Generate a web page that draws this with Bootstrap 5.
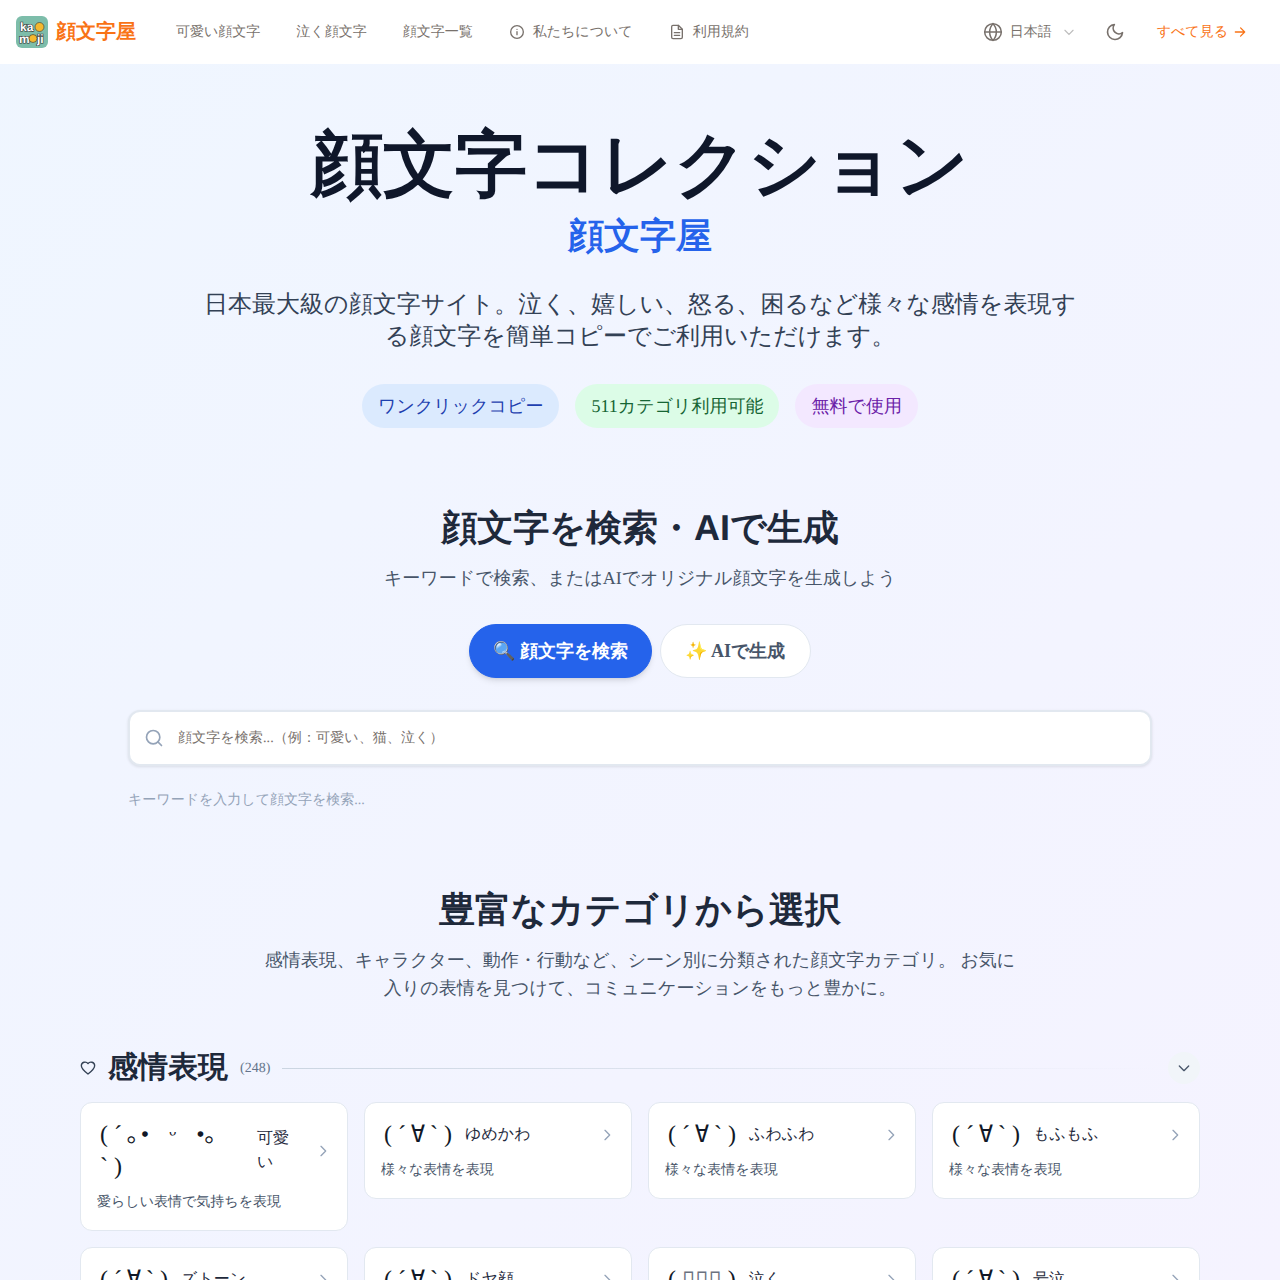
<!DOCTYPE html>
<html>
<head>
  <meta charset="UTF-8">
  <meta name="viewport" content="width=device-width, initial-scale=1.0">
  <title>顔文字屋</title>
  <link href="https://cdn.jsdelivr.net/npm/bootstrap@5.3.0/dist/css/bootstrap.min.css" rel="stylesheet">
  <style>
    html, body { height: 1280px; overflow: hidden; }
    body {
      font-family: "Liberation Serif", serif;
      background: linear-gradient(135deg, #eff6ff, #f5f3ff);
      color: #1e293b;
      text-rendering: geometricPrecision;
    }
    .top-bar { height: 64px; background: #fff; padding: 0 16px; }
    .logo-box { width: 32px; height: 32px; margin-right: 8px; flex: none; }
    .logo-name { font-size: 20px; font-weight: 700; color: #f97316; margin-right: 22px; }
    .top-link { font-size: 14px; color: #78716c; padding: 0 18px; display: flex; align-items: center; gap: 8px; text-decoration: none; white-space: nowrap; }
    .top-link svg { width: 16px; height: 16px; }
    .lang-link { font-size: 14px; color: #78716c; display: flex; align-items: center; gap: 7px; text-decoration: none; margin-right: 29px; }
    .lang-link .lang-caret { margin-left: 3px; }
    .more-link { font-size: 14px; color: #f97316; text-decoration: none; display: flex; align-items: center; gap: 5px; margin-left: 32px; margin-right: 17px; }
    .hero-title { font-size: 72px; font-weight: 700; line-height: 80px; color: #0f172a; margin: 61px 0 0; }
    .hero-sub { font-size: 36px; font-weight: 700; color: #2563eb; line-height: 52px; margin: 5px 0 27px; }
    .hero-text { font-size: 24px; line-height: 32px; color: #334155; width: 880px; margin: 0 auto 31px; }
    .pill { font-size: 18px; line-height: 28px; padding: 8px 16px; border-radius: 22px; }
    .pill-blue { background: #dbeafe; color: #1e40af; }
    .pill-green { background: #dcfce7; color: #166534; }
    .pill-purple { background: #f3e8ff; color: #6b21a8; }
    .sec-title { font-size: 36px; font-weight: 700; line-height: 40px; color: #1e293b; font-family: "Liberation Sans", sans-serif; margin-bottom: 16px; }
    .sec-text { font-size: 18px; line-height: 28px; color: #475569; }
    .tab-btn { font-size: 18px; font-weight: 700; height: 54px; padding: 0 24.5px; border-radius: 27px; border: 1px solid #e2e8f0; background: #fff; color: #475569; }
    .tab-on { background: #2563eb; border-color: #2563eb; color: #fff; padding: 0 23px; box-shadow: 0 4px 6px -1px rgba(0,0,0,.1), 0 2px 4px -2px rgba(0,0,0,.1); }
    .search-wrap { width: 1024px; margin: 0 auto; }
    .search-box { height: 56px; background: #fff; border: 2px solid #e2e8f0; border-radius: 12px; padding: 0 14px; gap: 14px; box-shadow: 0 1px 3px rgba(0,0,0,.1); font-size: 14px; color: #78716c; letter-spacing: .1px; }
    .search-hint { font-size: 14px; line-height: 20px; color: #94a3b8; margin-top: 25px; }
    .cats { width: 1120px; margin: 48px auto 0; }
    .group-name { font-size: 30px; font-weight: 700; line-height: 36px; color: #1e293b; }
    .group-count { font-size: 14px; color: #64748b; }
    .group-line { height: 1px; background: linear-gradient(90deg, #cbd5e1, transparent); }
    .fold-btn { width: 32px; height: 32px; border-radius: 50%; background: #f1f5f9; border: 0; padding: 0; }
    .kao-grid { display: grid; grid-template-columns: repeat(4, 1fr); gap: 16px; align-items: start; }
    .kao-card { background: #fff; border: 1px solid #e2e8f0; border-radius: 12px; padding: 16px; }
    .kao-face { font-size: 24px; line-height: 32px; color: #111827; padding: 0 1px 0 3px; min-width: 0; }
    .kao-name { font-size: 16px; line-height: 24px; color: #1e293b; margin-left: 12px; min-width: 0; }
    .kao-tight .kao-face { flex: none; width: 146px; }
    .kao-tight .kao-name { flex: none; width: 40px; margin-left: 14px; }
    .kao-desc { font-size: 14px; line-height: 23px; color: #475569; margin-top: 8px; }
    .kao-arrow { width: 16px; height: 16px; flex: none; }
    .tofu { color: #6b7280; line-height: 1; }
    .wide-sym { font-family: "DejaVu Sans Mono", monospace; line-height: 1; padding: 0 4.8px; }
    .dot-sym { font-family: "Noto Sans CJK JP", sans-serif; line-height: 1; }
  </style>
</head>
<body>
  <nav class="top-bar d-flex align-items-center">
    <svg class="logo-box" viewBox="0 0 32 32">
      <rect width="32" height="32" rx="6" fill="#7dbdaa"/>
      <g font-family="Liberation Sans" font-weight="700" font-size="12" fill="#fff" stroke="#333" stroke-width="1.200" paint-order="stroke">
        <text x="4" y="15">ka</text>
        <text x="3" y="27">m</text>
        <text x="21" y="27">ji</text>
      </g>
      <circle cx="23.500" cy="11" r="4.500" fill="#f5b82e" stroke="#333" stroke-width=".6"/>
      <circle cx="17" cy="22.500" r="4" fill="#f5b82e" stroke="#333" stroke-width=".6"/>
    </svg>
    <span class="logo-name">顔文字屋</span>
    <a class="top-link" href="#">可愛い顔文字</a>
    <a class="top-link" href="#">泣く顔文字</a>
    <a class="top-link" href="#">顔文字一覧</a>
    <a class="top-link" href="#">
      <svg viewBox="0 0 24 24" fill="none" stroke="currentColor" stroke-width="2" stroke-linecap="round"><circle cx="12" cy="12" r="9.500"/><path d="M12 16v-4.500M12 8h.01"/></svg>私たちについて</a>
    <a class="top-link" href="#">
      <svg viewBox="0 0 24 24" fill="none" stroke="currentColor" stroke-width="2" stroke-linejoin="round" stroke-linecap="round"><path d="M14 2H6a2 2 0 0 0-2 2v16a2 2 0 0 0 2 2h12a2 2 0 0 0 2-2V8z"/><path d="M14 2v6h6M8 13h8M8 17h8"/></svg>利用規約</a>
    <div class="ms-auto d-flex align-items-center">
      <a class="lang-link" href="#">
        <svg width="20" height="20" viewBox="0 0 24 24" fill="none" stroke="currentColor" stroke-width="1.800"><circle cx="12" cy="12" r="10"/><path d="M2 12h20M12 2c3 3 4 6.500 4 10s-1 7-4 10c-3-3-4-6.500-4-10s1-7 4-10z"/></svg>日本語
        <svg class="lang-caret" width="14" height="14" viewBox="0 0 24 24" fill="none" stroke="#bdbdbd" stroke-width="2" stroke-linecap="round"><path d="M5 9l7 7 7-7"/></svg>
      </a>
      <svg width="20" height="20" viewBox="0 0 24 24" fill="none" stroke="#78716c" stroke-width="2" stroke-linejoin="round"><path d="M21 12.800A9 9 0 1 1 11.200 3a7 7 0 0 0 9.800 9.800z"/></svg>
      <a class="more-link" href="#">すべて見る
        <svg width="14" height="14" viewBox="0 0 24 24" fill="none" stroke="currentColor" stroke-width="2.200" stroke-linecap="round" stroke-linejoin="round"><path d="M4 12h16M13 5l7 7-7 7"/></svg>
      </a>
    </div>
  </nav>

  <header class="text-center">
    <h1 class="hero-title">顔文字コレクション</h1>
    <div class="hero-sub">顔文字屋</div>
    <p class="hero-text">日本最大級の顔文字サイト。泣く、嬉しい、怒る、困るなど様々な感情を表現する顔文字を簡単コピーでご利用いただけます。</p>
    <div class="d-flex justify-content-center gap-3">
      <span class="pill pill-blue">ワンクリックコピー</span>
      <span class="pill pill-green">511カテゴリ利用可能</span>
      <span class="pill pill-purple">無料で使用</span>
    </div>
  </header>

  <section class="text-center" style="margin-top:80px">
    <h2 class="sec-title">顔文字を検索・AIで生成</h2>
    <p class="sec-text" style="margin-bottom:32px">キーワードで検索、またはAIでオリジナル顔文字を生成しよう</p>
    <div class="d-flex justify-content-center gap-2" style="margin-bottom:32px">
      <button class="tab-btn tab-on">🔍 顔文字を検索</button>
      <button class="tab-btn">✨ AIで生成</button>
    </div>
    <div class="search-wrap text-start">
      <div class="search-box d-flex align-items-center">
        <svg width="20" height="20" viewBox="0 0 24 24" fill="none" stroke="#94a3b8" stroke-width="2" stroke-linecap="round"><circle cx="11" cy="11" r="8"/><path d="M21 21l-4.300-4.300"/></svg>
        <span>顔文字を検索...（例：可愛い、猫、泣く）</span>
      </div>
      <div class="search-hint">キーワードを入力して顔文字を検索...</div>
    </div>
  </section>

  <section class="text-center" style="margin-top:79px">
    <h2 class="sec-title">豊富なカテゴリから選択</h2>
    <p class="sec-text mx-auto mb-0" style="width:760px">感情表現、キャラクター、動作・行動など、シーン別に分類された顔文字カテゴリ。 お気に入りの表情を見つけて、コミュニケーションをもっと豊かに。</p>
  </section>

  <section class="cats">
    <div class="d-flex align-items-center gap-2 mb-3">
      <svg width="16" height="16" class="me-1" viewBox="0 0 24 24" fill="none" stroke="#334155" stroke-width="2" stroke-linejoin="round"><path d="M12 21C5 15.500 2 12 2 8.500A5.500 5.500 0 0 1 12 5.500 5.500 5.500 0 0 1 22 8.500C22 12 19 15.500 12 21z"/></svg>
      <span class="group-name me-1">感情表現</span>
      <span class="group-count me-1">(248)</span>
      <div class="group-line flex-grow-1 me-1"></div>
      <button class="fold-btn d-flex align-items-center justify-content-center">
        <svg width="16" height="16" viewBox="0 0 24 24" fill="none" stroke="#475569" stroke-width="2" stroke-linecap="round" stroke-linejoin="round"><path d="M5 9l7 7 7-7"/></svg>
      </button>
    </div>
    <div class="kao-grid" id="rows"></div>
  </section>

  <script src="https://cdn.jsdelivr.net/npm/bootstrap@5.3.0/dist/js/bootstrap.bundle.min.js"></script>
  <script>
    const GRIN = '( ´<span class="wide-sym">∀</span>` )';
    const CUTE = '( ´\u2009<span class="dot-sym">｡</span>\u200A•\u2002\u2004ᵕ\u2002\u2004•<span class="dot-sym">｡</span><br>` )';
    const FACES = [
      [CUTE, '可愛い', '愛らしい表情で気持ちを表現', 'kao-tight'],
      [GRIN, 'ゆめかわ', '様々な表情を表現'],
      [GRIN, 'ふわふわ', '様々な表情を表現'],
      [GRIN, 'もふもふ', '様々な表情を表現'],
      [GRIN, 'ズトーン', '様々な表情を表現'],
      [GRIN, 'ドヤ顔', '様々な表情を表現'],
      ['( <span class="tofu">▯▯▯</span> )', '泣く', '様々な表情を表現'],
      [GRIN, '号泣', '様々な表情を表現']
    ];
    document.getElementById('rows').innerHTML = FACES.map(f => `
      <div class="kao-card ${f[3] || ''}">
        <div class="d-flex align-items-center">
          <span class="kao-face">${f[0]}</span>
          <span class="kao-name">${f[1]}</span>
          <svg class="kao-arrow ms-auto" viewBox="0 0 24 24" fill="none" stroke="#94a3b8" stroke-width="2" stroke-linecap="round" stroke-linejoin="round"><path d="M9 5l7 7-7 7"/></svg>
        </div>
        <div class="kao-desc">${f[2]}</div>
      </div>`).join('');
  </script>
</body>
</html>
